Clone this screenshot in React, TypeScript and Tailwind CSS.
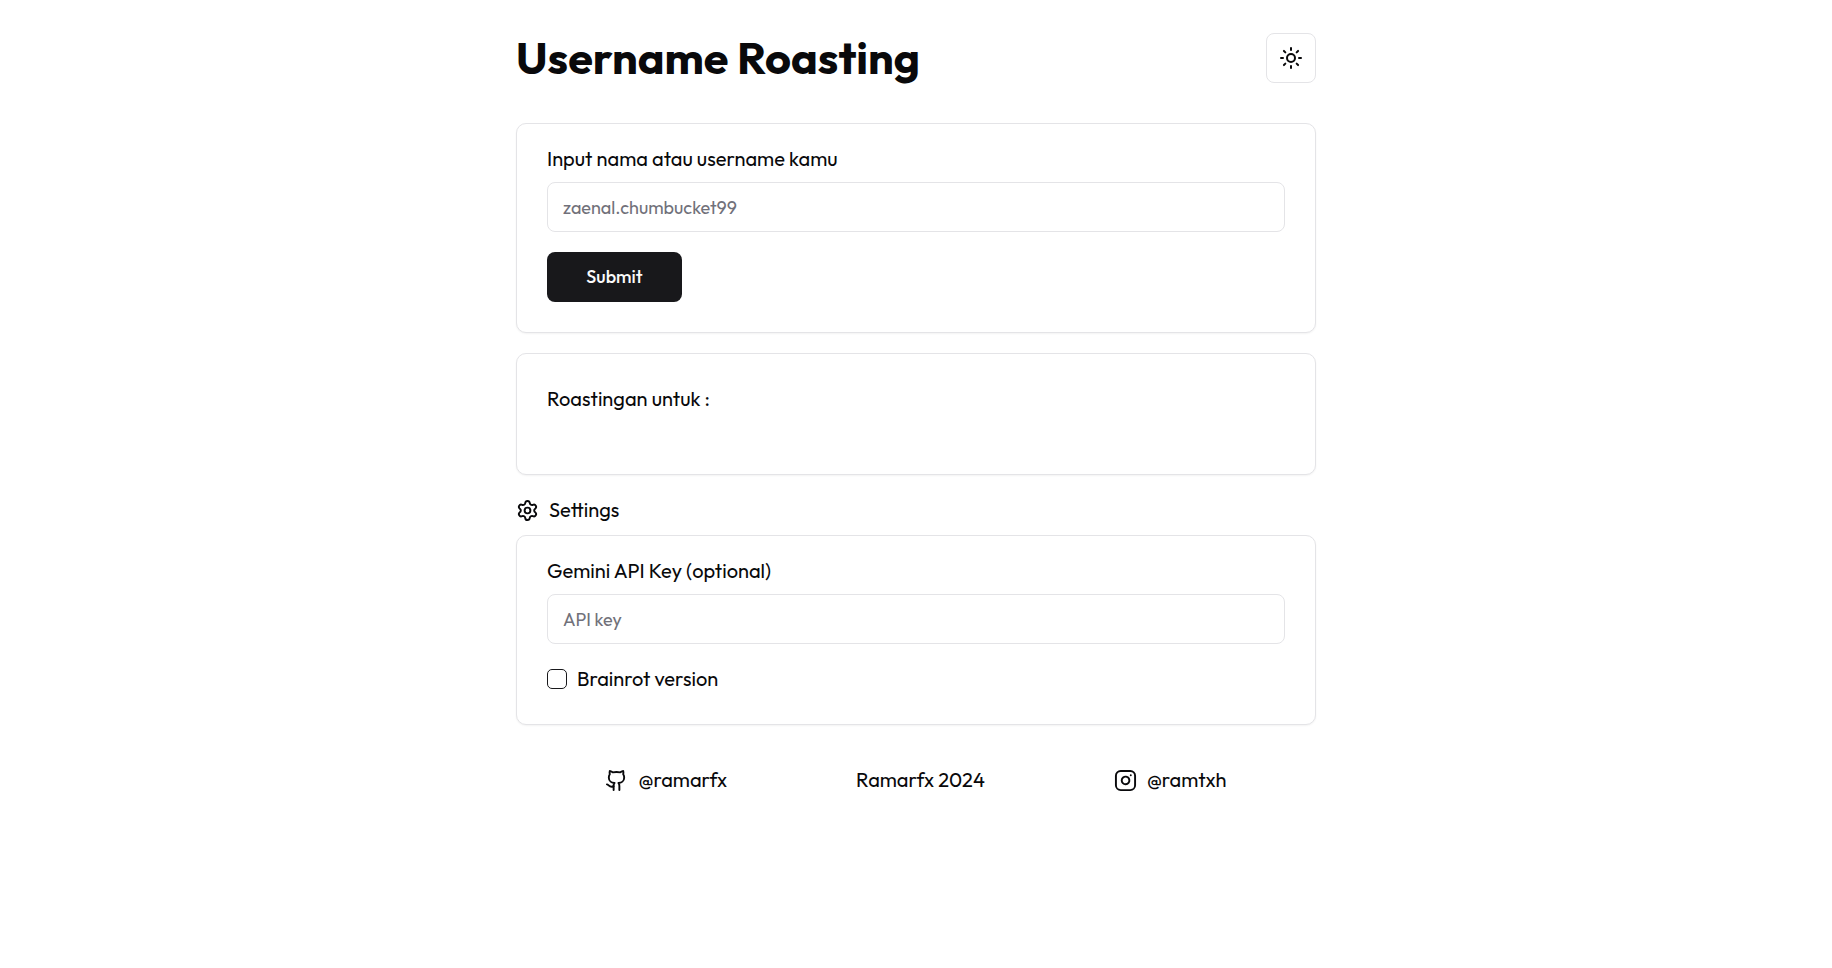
import { Settings, Sun, Github, Instagram } from "lucide-react";

const card = "rounded-[10px] border border-[#e4e4e7] bg-white px-[30px] shadow-xs";
const field =
  "h-[50px] w-full rounded-lg border border-[#e4e4e7] bg-white px-[15px] text-[18px] placeholder:text-[#71717a]";

export default function App() {
  return (
    <div className="min-h-screen bg-white px-4 font-['Outfit','Lato',sans-serif] text-[20px] leading-[30px] text-[#09090b]">
      <main className="mx-auto max-w-[800px] pt-[33px]">
        <header className="flex items-center justify-between">
          <h1 className="text-[45px] leading-[50px] font-bold">Username Roasting</h1>
          <button
            type="button"
            aria-label="Toggle theme"
            className="flex size-[50px] items-center justify-center rounded-lg border border-[#e4e4e7]"
          >
            <Sun className="size-6" />
          </button>
        </header>

        <form className={`${card} mt-10 pt-5 pb-[30px]`}>
          <label htmlFor="username" className="block">Input nama atau username kamu</label>
          <input id="username" type="text" placeholder="zaenal.chumbucket99" className={`${field} mt-2`} />
          <button
            type="button"
            className="mt-5 block h-[50px] w-[135px] rounded-lg bg-[#18181b] text-[18px] font-medium text-[#fafafa]"
          >
            Submit
          </button>
        </form>

        <section className={`${card} mt-5 min-h-[122px] pt-[30px]`}>
          <p>Roastingan untuk :</p>
        </section>

        <div className="mt-5 flex items-center gap-2.5">
          <Settings className="size-[23px]" />
          <h2>Settings</h2>
        </div>

        <section className={`${card} mt-2.5 pt-5 pb-[30px]`}>
          <label htmlFor="api-key" className="block">Gemini API Key (optional)</label>
          <input id="api-key" type="text" placeholder="API key" className={`${field} mt-2`} />
          <div className="mt-5 flex items-center gap-2.5">
            <input
              id="brainrot"
              type="checkbox"
              className="size-5 appearance-none rounded-[5px] border border-[#18181b] checked:bg-[#18181b]"
            />
            <label htmlFor="brainrot">Brainrot version</label>
          </div>
        </section>

        <footer className="mt-10 flex items-center justify-around px-[25px]">
          <a href="#github" className="flex items-center gap-2.5">
            <Github className="size-[23px]" />
            @ramarfx
          </a>
          <p>Ramarfx 2024</p>
          <a href="#instagram" className="flex items-center gap-2.5">
            <Instagram className="size-[23px]" />
            @ramtxh
          </a>
        </footer>
      </main>
    </div>
  );
}
